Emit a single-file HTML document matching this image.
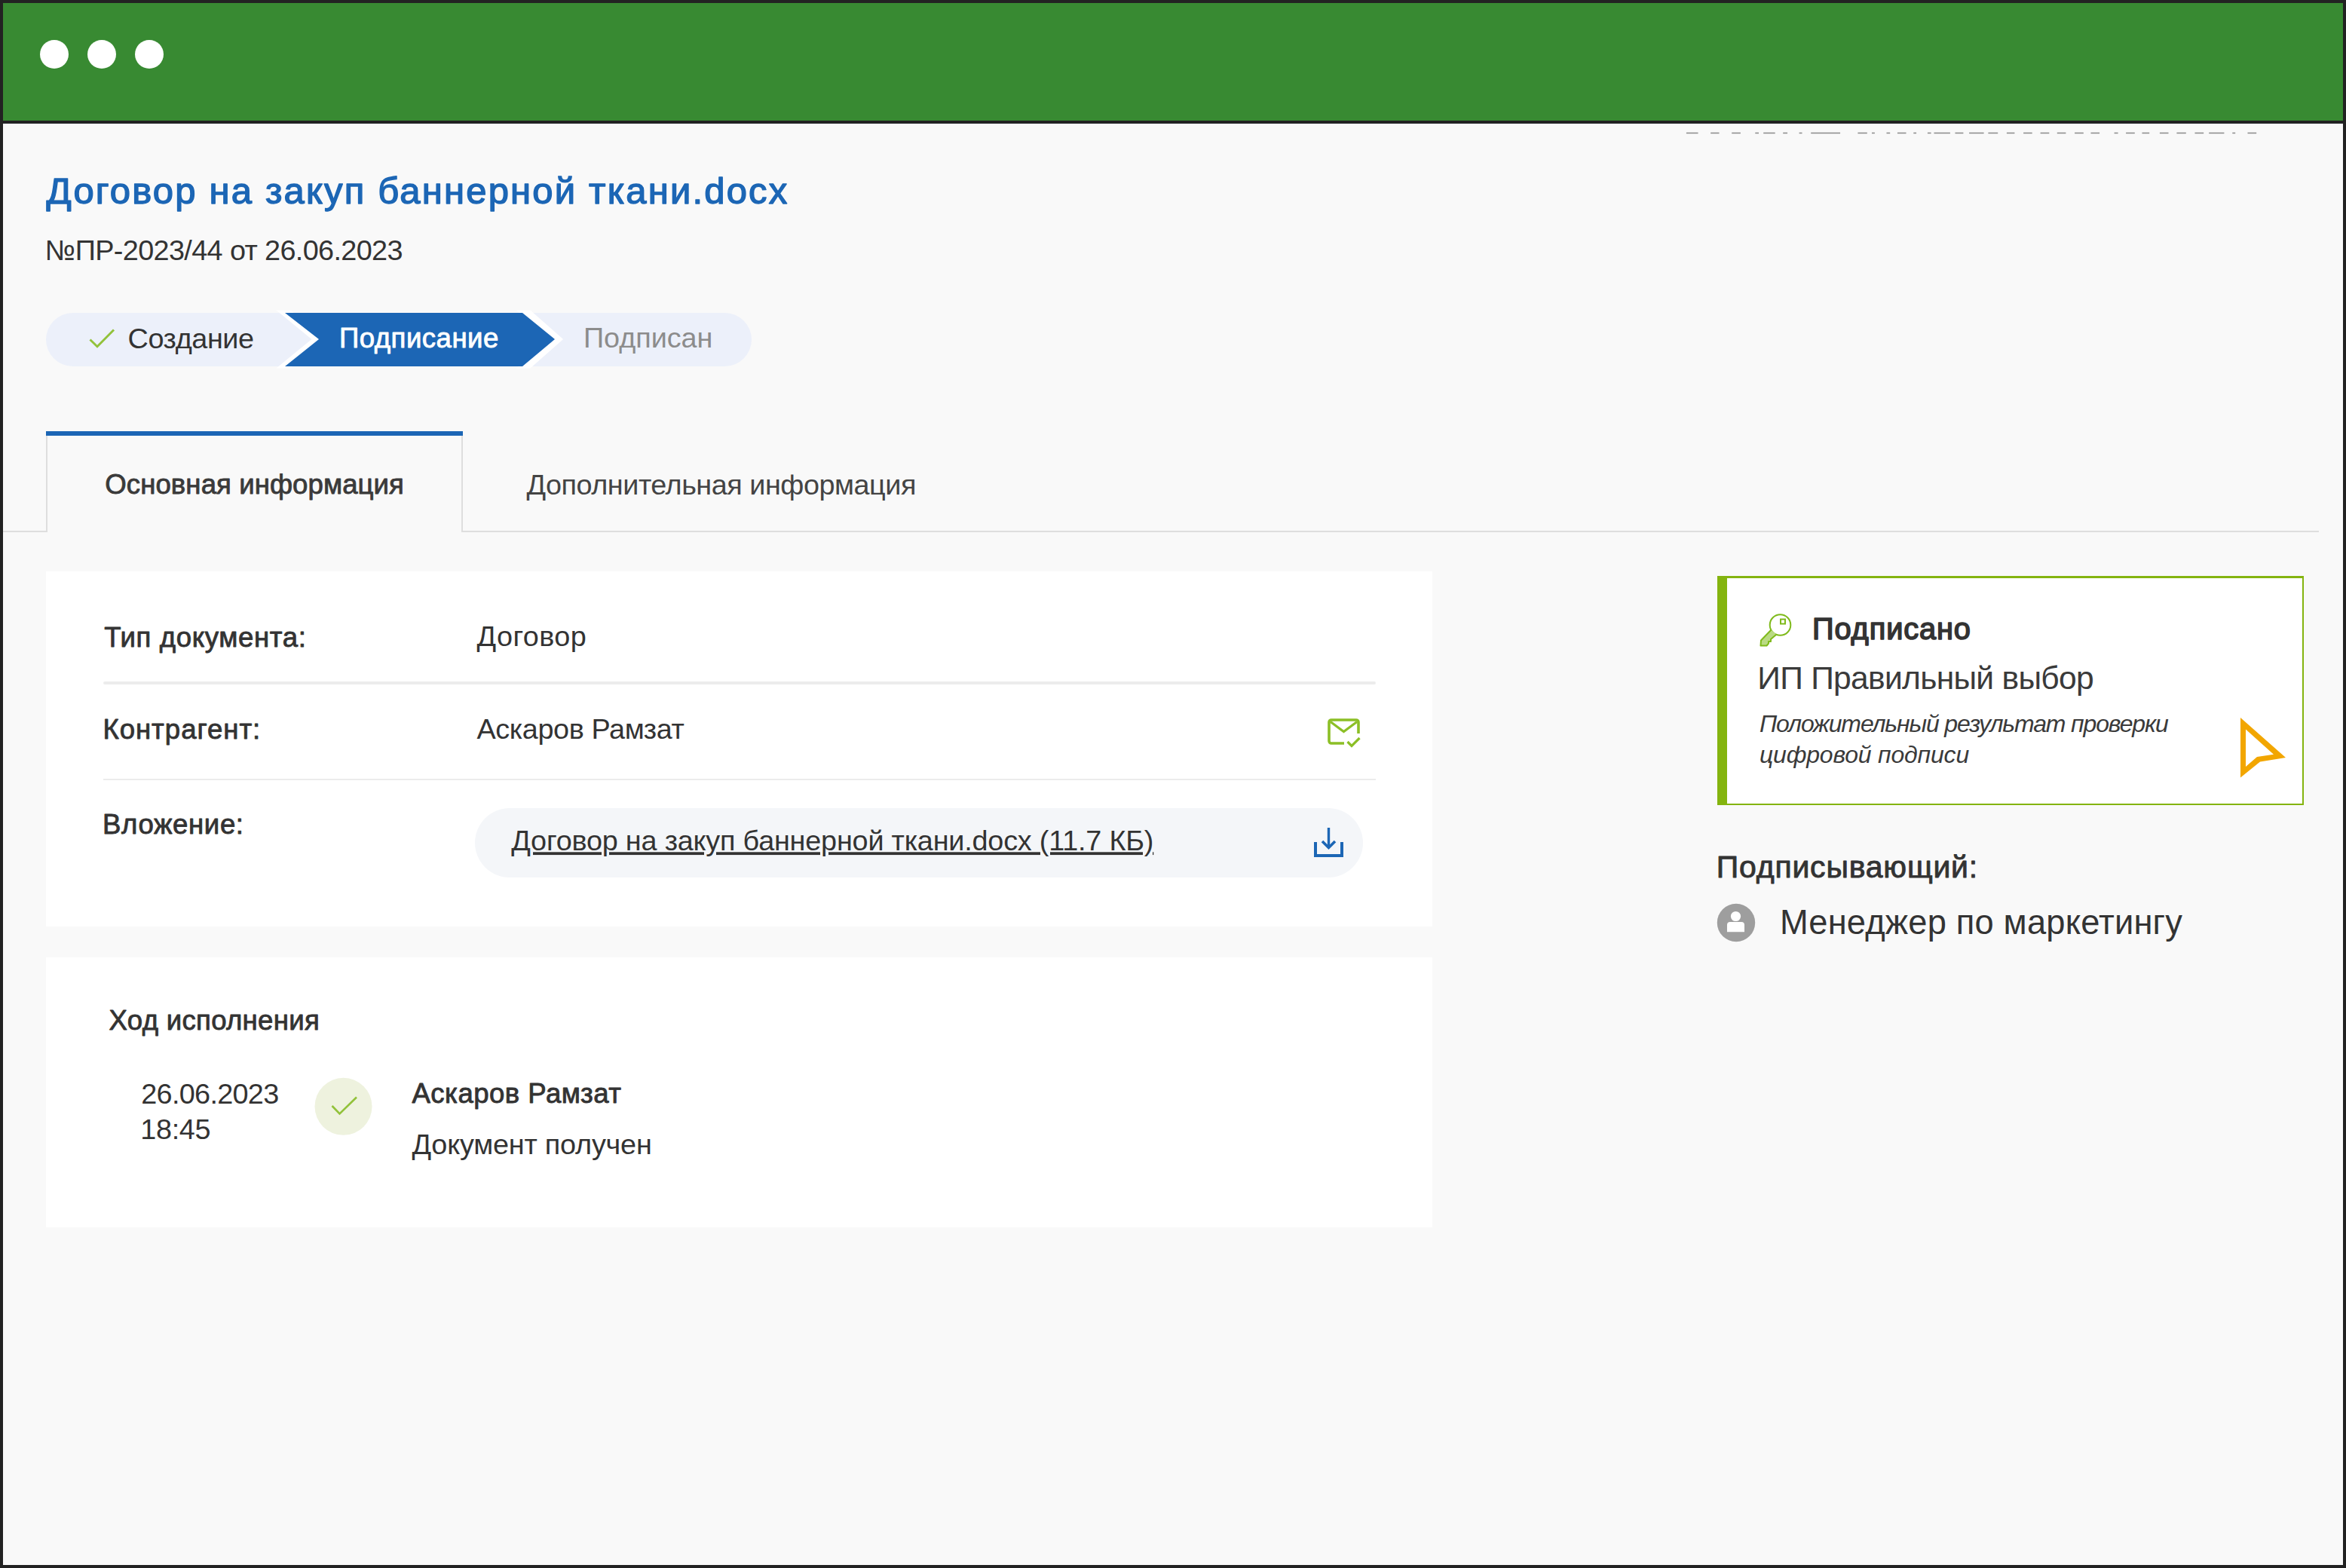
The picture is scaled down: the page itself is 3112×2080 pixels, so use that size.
<!DOCTYPE html>
<html><head><meta charset="utf-8"><style>
html,body{margin:0;padding:0;}
body{width:3112px;height:2080px;background:#222;position:relative;overflow:hidden;font-family:"Liberation Sans",sans-serif;}
.a{position:absolute;}
svg{position:absolute;left:0;top:0;}
text{font-family:"Liberation Sans",sans-serif;}
</style></head><body>
<div class="a" style="left:4px;top:4px;width:3104px;height:156px;background:#388a32"></div>
<div class="a" style="left:4px;top:164px;width:3104px;height:1912px;background:#f9f9f9"></div>
<div class="a" style="left:4px;top:164px;width:3104px;height:1px;background:#f3f5fb"></div>
<div class="a" style="left:53px;top:53px;width:38px;height:38px;border-radius:50%;background:#fff"></div>
<div class="a" style="left:116px;top:53px;width:38px;height:38px;border-radius:50%;background:#fff"></div>
<div class="a" style="left:179px;top:53px;width:38px;height:38px;border-radius:50%;background:#fff"></div>
<!-- tabs -->
<div class="a" style="left:4px;top:704px;width:3072px;height:2px;background:#dedede"></div>
<div class="a" style="left:61px;top:572px;width:553px;height:6px;background:#1c66b5"></div>
<div class="a" style="left:61px;top:578px;width:553px;height:128px;background:#f9f9f9;border-left:2px solid #dedede;border-right:2px solid #dedede;box-sizing:border-box"></div>
<!-- card1 -->
<div class="a" style="left:61px;top:758px;width:1839px;height:471px;background:#fff"></div>
<div class="a" style="left:137px;top:904px;width:1688px;height:4px;border-radius:2px;background:#ececec"></div>
<div class="a" style="left:137px;top:1033px;width:1688px;height:2px;background:#ececec"></div>
<div class="a" style="left:630px;top:1072px;width:1178px;height:92px;border-radius:46px;background:#f4f6f9"></div>
<!-- card2 -->
<div class="a" style="left:61px;top:1270px;width:1839px;height:358px;background:#fff"></div>
<!-- signed card -->
<div class="a" style="left:2278px;top:764px;width:778px;height:304px;background:#fff;border:2.5px solid #84b40f;border-top:3px solid #84b40f;border-left:13px solid #84b40f;box-sizing:border-box"></div>
<svg width="3112" height="2080" viewBox="0 0 3112 2080">
 <!-- step bar -->
 <rect x="61" y="415" width="936" height="71" rx="35.5" fill="#ecf0fa"/>
 <defs><clipPath id="cb"><rect x="0" y="411.5" width="1100" height="77"/></clipPath></defs>
 <g clip-path="url(#cb)"><polyline points="368,405 423,450 368,495" fill="none" stroke="#fff" stroke-width="12"/>
 <polyline points="687,405 738,450 687,495" fill="none" stroke="#fff" stroke-width="12"/></g>
 <polygon points="378,415 693,415 736,450 693,486 378,486 423,450" fill="#1c66b5"/>
 <!-- check step1 -->
 <polyline points="119.5,450.5 129,459.8 151,437.5" fill="none" stroke="#92c23a" stroke-width="2.9"/>
 <!-- mail icon -->
 <path d="M1783,986 H1766 a3,3 0 0 1 -3,-3 V958 a3,3 0 0 1 3,-3 H1799 a3,3 0 0 1 3,3 V973" fill="none" stroke="#8cbf26" stroke-width="3.6"/>
 <polyline points="1765,957.5 1782.5,970.5 1800,957.5" fill="none" stroke="#8cbf26" stroke-width="3.2"/>
 <polyline points="1787.5,984 1793,989.5 1803.5,979" fill="none" stroke="#8cbf26" stroke-width="3.2"/>
 <!-- download icon -->
 <path d="M1745,1117 V1135 H1780 V1117" fill="none" stroke="#1c66b5" stroke-width="4"/>
 <path d="M1762.5,1098 V1124" fill="none" stroke="#1c66b5" stroke-width="3.4"/>
 <polyline points="1754,1116 1762.5,1124.5 1771,1116" fill="none" stroke="#1c66b5" stroke-width="3.6"/>
 <!-- timeline circle -->
 <circle cx="455.5" cy="1467.8" r="38" fill="#eef2de"/>
 <polyline points="440.5,1467 450.5,1477.5 473,1455.5" fill="none" stroke="#92c23a" stroke-width="2.6"/>
 <!-- key icon -->
 <circle cx="2361.5" cy="829" r="13.8" fill="none" stroke="#7fba1b" stroke-width="2"/>
 <path d="M2349.5,835.5 L2336,849.5 L2335.5,856.5 L2343.5,856.5 L2346,853.5 L2346,851 L2349,851 L2349,848 L2356.5,841.5" fill="#b9da83" stroke="#7fba1b" stroke-width="2" stroke-linejoin="round"/>
 <rect x="2362" y="821.5" width="6" height="6" fill="none" stroke="#7fba1b" stroke-width="2"/>
 <!-- cursor -->
 <path d="M2972,952 L3032,1005 L2998,1010.5 L2972,1031.5 Z M2979,967.5 V1017 L2994,1004 L3016,1000.7 Z" fill="#f2a600" fill-rule="evenodd"/>
 <!-- avatar -->
 <circle cx="2303" cy="1224" r="25.2" fill="#9e9e9e"/>
 <circle cx="2302.5" cy="1215.5" r="6.6" fill="#fff"/>
 <path d="M2291,1236.3 V1227 Q2291,1223 2295,1223 H2310 Q2314,1223 2314,1227 V1236.3 Z" fill="#fff"/>
 <!-- clipped text line -->
 <path d="M2236.9,176.5H2252.5 M2269.2,176.5H2280.5 M2297.2,176.5H2308.9 M2328.3,176.5H2333.0 M2339.2,176.5H2354.7 M2365.2,176.5H2371.1 M2386.6,176.5H2390.5 M2402.2,176.5H2441.1 M2464.4,176.5H2476.8 M2483.0,176.5H2486.9 M2502.5,176.5H2507.2 M2516.9,176.5H2528.5 M2538.3,176.5H2542.1 M2556.9,176.5H2561.6 M2565.5,176.5H2586.9 M2593.5,176.5H2604.4 M2612.1,176.5H2631.6 M2637.4,176.5H2650.2 M2661.9,176.5H2672.4 M2684.1,176.5H2695.7 M2706.6,176.5H2718.3 M2728.8,176.5H2740.4 M2752.1,176.5H2763.8 M2773.5,176.5H2785.1 M2804.6,176.5H2809.6 M2820.1,176.5H2831.8 M2841.5,176.5H2851.2 M2864.9,176.5H2876.5 M2887.4,176.5H2899.8 M2911.5,176.5H2923.2 M2930.2,176.5H2950.4 M2961.3,176.5H2965.2 M2981.5,176.5H2993.2" stroke="#8a8a8a" stroke-width="1.6" fill="none"/>
<text x='61.5' y='269.8' font-size='49.0' letter-spacing='2.167' fill='#1c66b5' stroke='#1c66b5' stroke-width='1.4' stroke-linejoin='round'>Договор на закуп баннерной ткани.docx</text>
<text x='59.8' y='345.1' font-size='37.8' letter-spacing='-0.629' fill='#333333'>№ПР-2023/44 от 26.06.2023</text>
<text x='169.5' y='461.6' font-size='37.8' letter-spacing='-0.414' fill='#333333'>Создание</text>
<text x='450.0' y='461.2' font-size='36.6' letter-spacing='0.478' fill='#ffffff' stroke='#ffffff' stroke-width='0.85' stroke-linejoin='round'>Подписание</text>
<text x='774.0' y='461.2' font-size='37.8' letter-spacing='-0.057' fill='#8c8c8c'>Подписан</text>
<text x='139.3' y='655.3' font-size='36.6' letter-spacing='0.072' fill='#3a3a3a' stroke='#3a3a3a' stroke-width='0.85' stroke-linejoin='round'>Основная информация</text>
<text x='698.5' y='655.5' font-size='37.8' letter-spacing='-0.479' fill='#444444'>Дополнительная информация</text>
<text x='138.2' y='857.6' font-size='36.6' letter-spacing='0.623' fill='#333333' stroke='#333333' stroke-width='0.85' stroke-linejoin='round'>Тип документа:</text>
<text x='632.5' y='857.4' font-size='37.8' letter-spacing='0.417' fill='#333333'>Договор</text>
<text x='136.4' y='979.6' font-size='36.6' letter-spacing='0.960' fill='#333333' stroke='#333333' stroke-width='0.85' stroke-linejoin='round'>Контрагент:</text>
<text x='632.5' y='979.6' font-size='37.8' letter-spacing='-0.392' fill='#333333'>Аскаров Рамзат</text>
<text x='136.0' y='1106.1' font-size='36.6' letter-spacing='0.625' fill='#333333' stroke='#333333' stroke-width='0.85' stroke-linejoin='round'>Вложение:</text>
<text x='678.3' y='1128.3' font-size='37.8' letter-spacing='-0.207' fill='#333333' text-decoration='underline'>Договор на закуп баннерной ткани.docx (11.7 КБ)</text>
<text x='144.6' y='1365.5' font-size='36.6' letter-spacing='0.285' fill='#333333' stroke='#333333' stroke-width='0.85' stroke-linejoin='round'>Ход исполнения</text>
<text x='187.3' y='1463.5' font-size='37.8' letter-spacing='-0.700' fill='#333333'>26.06.2023</text>
<text x='186.3' y='1510.6' font-size='37.8' letter-spacing='-0.325' fill='#333333'>18:45</text>
<text x='546.5' y='1463.3' font-size='36.6' letter-spacing='0.462' fill='#333333' stroke='#333333' stroke-width='0.85' stroke-linejoin='round'>Аскаров Рамзат</text>
<text x='546.5' y='1530.5' font-size='37.8' letter-spacing='-0.207' fill='#333333'>Документ получен</text>
<text x='2404.0' y='848.2' font-size='39.8' letter-spacing='0.875' fill='#333333' stroke='#333333' stroke-width='1.6' stroke-linejoin='round'>Подписано</text>
<text x='2331.3' y='913.8' font-size='42.6' letter-spacing='-0.717' fill='#3a3a3a'>ИП Правильный выбор</text>
<text x='2334.0' y='970.6' font-size='32.0' letter-spacing='-1.145' fill='#3a3a3a' font-style='italic'>Положительный результат проверки</text>
<text x='2334.0' y='1011.5' font-size='32.0' letter-spacing='-0.200' fill='#3a3a3a' font-style='italic'>цифровой подписи</text>
<text x='2276.8' y='1163.6' font-size='41.0' letter-spacing='0.785' fill='#333333' stroke='#333333' stroke-width='0.9' stroke-linejoin='round'>Подписывающий:</text>
<text x='2360.9' y='1238.5' font-size='45.3' letter-spacing='0.171' fill='#333333'>Менеджер по маркетингу</text>
</svg>
</body></html>
